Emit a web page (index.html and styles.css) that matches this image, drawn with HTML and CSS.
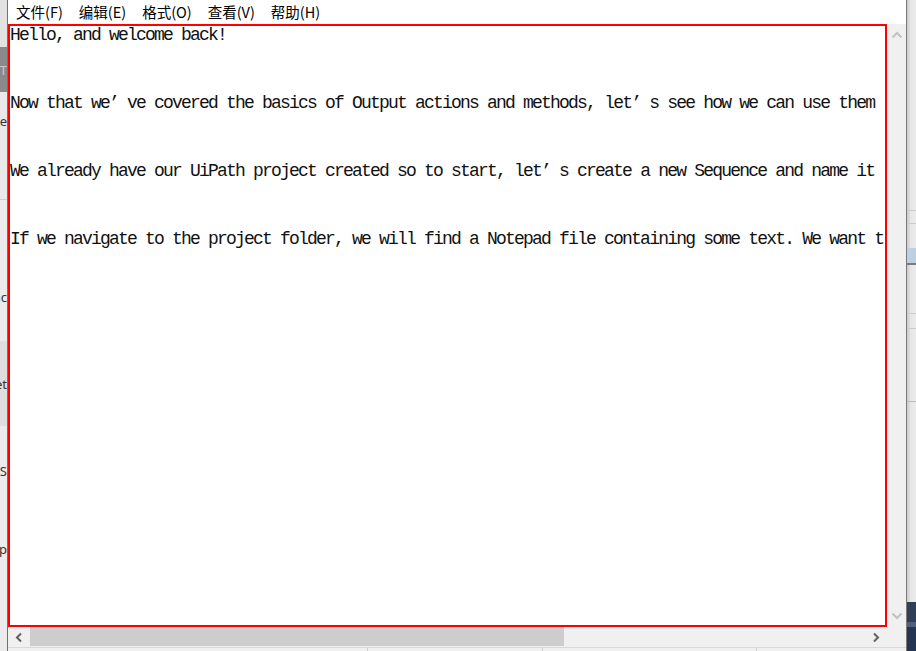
FILE: index.html
```html
<!DOCTYPE html>
<html lang="zh">
<head>
<meta charset="utf-8">
<title>Notepad</title>
<link rel="stylesheet" href="styles.css">
</head>
<body>
<div class="screen">
  <div class="bg-left">
    <div class="ls ls-a"></div>
    <div class="ls ls-b"><span class="frag light">T</span></div>
    <div class="ls ls-c"><span class="frag">ave</span></div>
    <div class="ls ls-d"><span class="frag">Sync</span></div>
    <div class="ls ls-e"><span class="frag">Set</span></div>
    <div class="ls ls-f"><span class="frag">t: S</span></div>
    <div class="ls ls-g"><span class="frag">Inp</span></div>
    <div class="ls ls-h"></div>
  </div>
  <div class="window">
    <div class="menubar">
      <span class="menu-item">文件(F)</span>
      <span class="menu-item">编辑(E)</span>
      <span class="menu-item">格式(O)</span>
      <span class="menu-item">查看(V)</span>
      <span class="menu-item">帮助(H)</span>
    </div>
    <div class="editor-row">
      <div class="editor">
        <p class="line">Hello, and welcome back!</p>
        <p class="line">Now that we<span class="fw">’</span>ve covered the basics of Output actions and methods, let<span class="fw">’</span>s see how we can use them</p>
        <p class="line">We already have our UiPath project created so to start, let<span class="fw">’</span>s create a new Sequence and name it</p>
        <p class="line">If we navigate to the project folder, we will find a Notepad file containing some text. We want t</p>
      </div>
      <div class="vscroll">
        <div class="sbtn vbtn">
          <svg width="12" height="8" viewBox="0 0 12 8"><polyline points="1.5,6.5 6,2 10.5,6.5" class="chev-light"/></svg>
        </div>
        <div class="vtrack"></div>
        <div class="sbtn vbtn">
          <svg width="12" height="8" viewBox="0 0 12 8"><polyline points="1.5,1.5 6,6 10.5,1.5" class="chev-light"/></svg>
        </div>
      </div>
    </div>
    <div class="hscroll-row">
      <div class="hscroll">
        <div class="sbtn hbtn">
          <svg width="8" height="11" viewBox="0 0 8 11"><polyline points="6,1.5 2,5.5 6,9.5" class="chev-dark"/></svg>
        </div>
        <div class="hthumb"></div>
        <div class="htrack"></div>
        <div class="sbtn hbtn">
          <svg width="8" height="11" viewBox="0 0 8 11"><polyline points="2,1.5 6,5.5 2,9.5" class="chev-dark"/></svg>
        </div>
      </div>
      <div class="corner"></div>
    </div>
    <div class="statusbar">
      <div class="cell cell-1"></div>
      <div class="cell cell-2"></div>
      <div class="cell cell-3"></div>
      <div class="cell cell-4"></div>
    </div>
  </div>
  <div class="bg-right">
    <div class="rs rs-a"></div>
    <div class="rs rs-line"></div>
    <div class="rs rs-b"></div>
    <div class="rs rs-line"></div>
    <div class="rs rs-c"></div>
    <div class="rs rs-blue"></div>
    <div class="rs rs-dark"></div>
    <div class="rs rs-d"></div>
    <div class="rs rs-line"></div>
    <div class="rs rs-e"></div>
    <div class="rs rs-line"></div>
    <div class="rs rs-f"></div>
    <div class="rs rs-bline"></div>
    <div class="rs rs-g"></div>
    <div class="rs rs-navy"></div>
    <div class="rs rs-navy2"></div>
    <div class="rs rs-navy3"></div>
  </div>
</div>
</body>
</html>
```

FILE: styles.css
```css
html, body {
  margin: 0;
  padding: 0;
  background: #e8e8e8;
}
.screen {
  display: flex;
  width: 916px;
  height: 651px;
  overflow: hidden;
}

/* desktop background, left */
.bg-left {
  width: 7px;
  flex: none;
  display: flex;
  flex-direction: column;
  overflow: hidden;
  font-family: "Noto Sans", sans-serif;
  font-size: 13px;
  color: #333;
}
.ls {
  display: flex;
  justify-content: flex-end;
  align-items: center;
  overflow: hidden;
  white-space: nowrap;
}
.frag.light { color: #c8c8c8; }
.ls-a { height: 47px; background: #e2e2e2; }
.ls-b { height: 45px; background: #8a8a8a; }
.ls-c { height: 108px; background: #e9e9e9; border-bottom: 1px solid #d0d0d0; align-items: flex-start; padding-top: 20px; box-sizing: border-box; }
.ls-d { height: 141px; background: #ebebeb; align-items: flex-start; padding-top: 88px; box-sizing: border-box; }
.ls-e { height: 85px; background: #dedede; }
.ls-f { height: 90px; background: #ebebeb; }
.ls-g { height: 90px; background: #ebebeb; align-items: flex-start; padding-top: 24px; box-sizing: border-box; }
.ls-h { flex: 1; background: #ebebeb; }

/* notepad window */
.window {
  width: 898px;
  flex: none;
  display: flex;
  flex-direction: column;
  border-left: 1px solid #727272;
  border-right: 1px solid #7a7a7a;
  background: #f0f0f0;
}
.menubar {
  height: 24px;
  flex: none;
  display: flex;
  align-items: center;
  gap: 16px;
  padding-left: 8px;
  background: #ffffff;
  font-family: "Noto Sans CJK SC", "Microsoft YaHei", sans-serif;
  font-size: 14.5px;
  line-height: 24px;
  color: #000;
}
.menu-item { white-space: nowrap; }

.editor-row {
  height: 603px;
  flex: none;
  display: flex;
}
.editor {
  width: 879px;
  flex: none;
  box-sizing: border-box;
  border: 2px solid #ff0000;
  background: #ffffff;
  overflow: hidden;
  font-family: "Liberation Mono", "Courier New", monospace;
  font-size: 18px;
  letter-spacing: -1.8px;
  line-height: 18px;
  color: #111;
}
.line {
  margin: 0 0 50px 0;
  white-space: pre;
}
.fw {
  display: inline-block;
  width: 18px;
  text-align: left;
  letter-spacing: 0;
}

.vscroll {
  flex: 1;
  display: flex;
  flex-direction: column;
  background: #f0f0f0;
}
.sbtn {
  display: flex;
  align-items: center;
  justify-content: center;
  flex: none;
}
.vbtn { height: 22px; }
.vtrack { flex: 1; }
.chev-light {
  fill: none;
  stroke: #c2c2c2;
  stroke-width: 2;
}
.chev-dark {
  fill: none;
  stroke: #606060;
  stroke-width: 2;
}

.hscroll-row {
  height: 20px;
  flex: none;
  display: flex;
}
.hscroll {
  width: 879px;
  flex: none;
  display: flex;
  background: #f0f0f0;
}
.hbtn { width: 22px; }
.hthumb {
  width: 534px;
  flex: none;
  background: #cdcdcd;
  margin-bottom: 1px;
}
.htrack { flex: 1; }
.corner { flex: 1; background: #f0f0f0; }

.statusbar {
  flex: 1;
  display: flex;
  border-top: 1px solid #d9d9d9;
  background: #f0f0f0;
}
.cell { box-sizing: border-box; }
.cell-1 { width: 360px; border-right: 1px solid #cfcfcf; }
.cell-2 { width: 175px; border-right: 1px solid #cfcfcf; }
.cell-3 { width: 214px; border-right: 1px solid #cfcfcf; }
.cell-4 { flex: 1; }

/* desktop background, right */
.bg-right {
  flex: 1;
  display: flex;
  flex-direction: column;
  background: linear-gradient(to right, #c9c9c9, #e6e6e6 40%, #ececec);
}
.rs { flex: none; }
.rs-a { height: 210px; }
.rs-line { height: 1px; background: #cdcdcd; }
.rs-b { height: 12px; }
.rs-c { height: 24px; }
.rs-blue { height: 15px; background: #bcd0e2; }
.rs-dark { height: 2px; background: #7c7c7c; }
.rs-d { height: 48px; }
.rs-e { height: 14px; }
.rs-f { height: 72px; }
.rs-bline { height: 1px; background: #a9bfd6; }
.rs-g { height: 200px; }
.rs-navy { height: 20px; background: #2f3f58; }
.rs-navy2 { height: 5px; background: #4d6080; }
.rs-navy3 { flex: 1; background: #233552; }
```
